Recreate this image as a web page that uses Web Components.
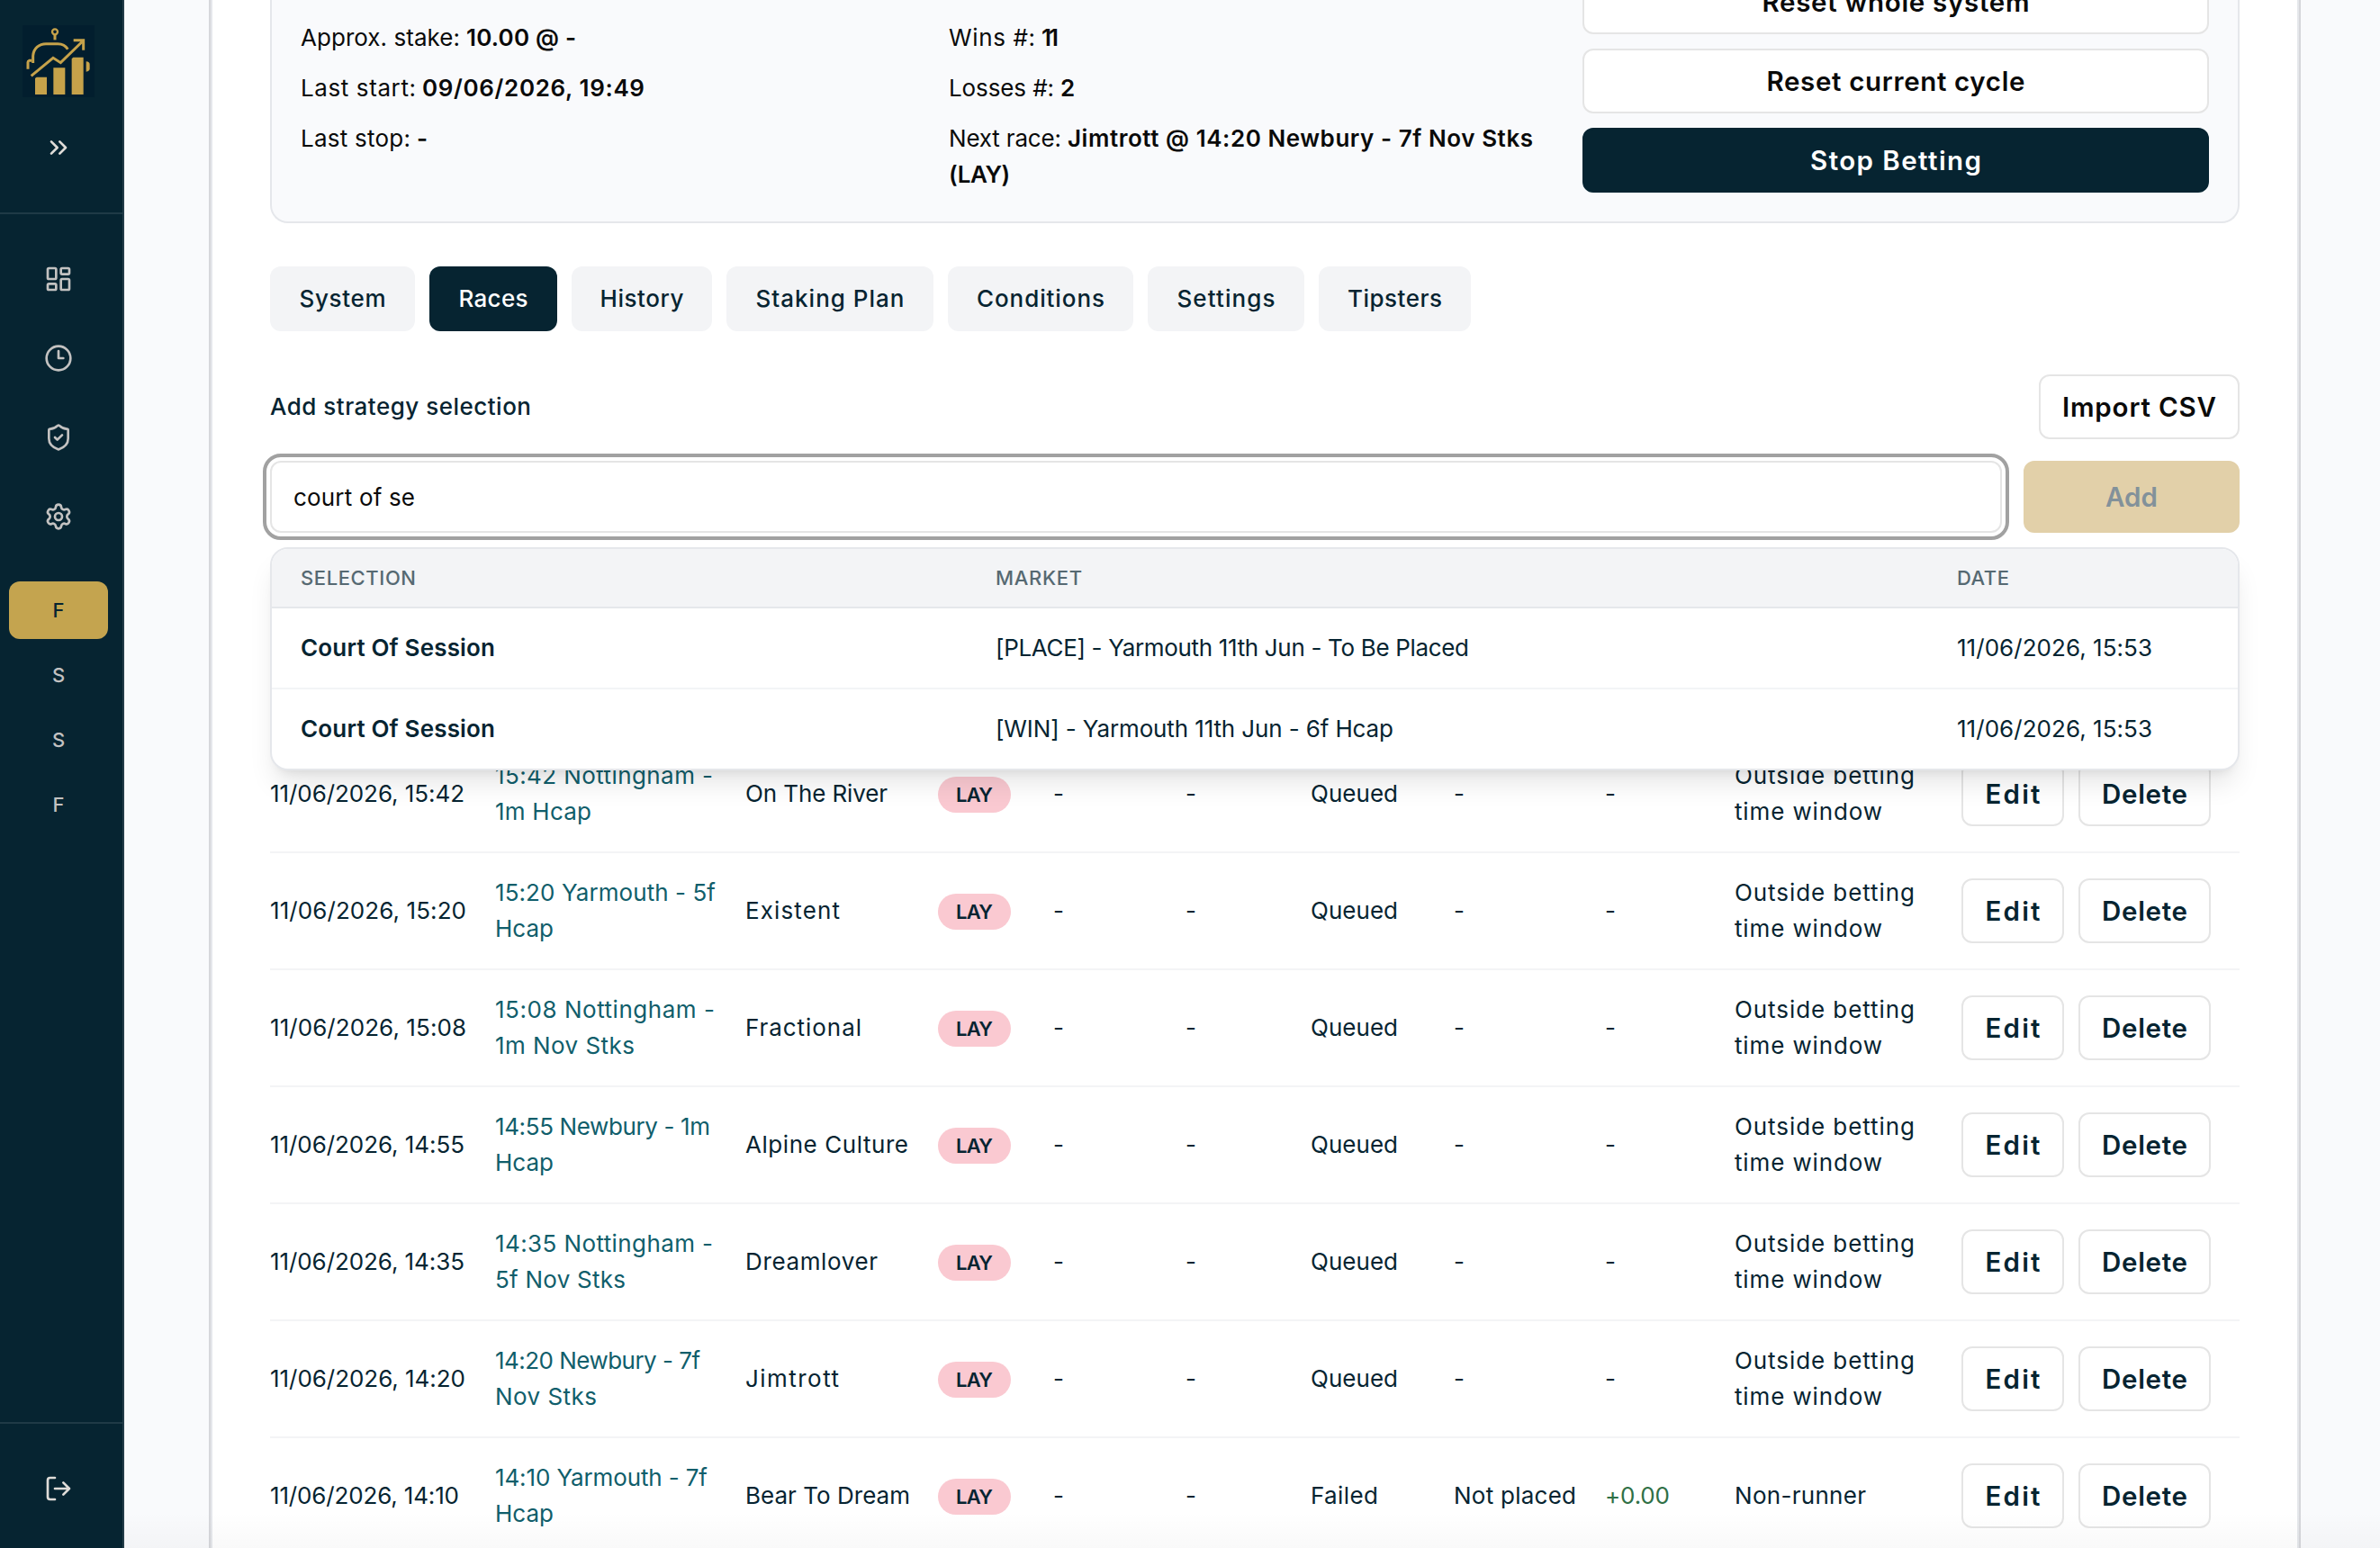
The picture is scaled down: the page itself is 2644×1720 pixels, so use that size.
<!DOCTYPE html>
<html lang="en">
<head>
<meta charset="utf-8">
<title>Races</title>
<style>
html, body { margin: 0; height: 100%; overflow: hidden; }
body { background: #f9fafc; font: 26px/40px Inter, "Liberation Sans", sans-serif; color: #062431; }
</style>
</head>
<body>
<betting-app></betting-app>
<script>
const define = (name, html, setup) => customElements.define(name, class extends HTMLElement {
    connectedCallback() {
        if (this.shadowRoot) return;
        this.attachShadow({ mode: 'open' }).innerHTML = typeof html === 'function' ? html(this) : html;
        if (setup) setup(this);
    }
});

// text tracked out to a given width
define('fit-text', `<style>:host{display:inline-block;white-space:pre}</style><slot></slot>`, el => {
    const w = +el.getAttribute('w');
    const n = el.textContent.length;
    if (!w || n < 2) return;
    const space = (w + 1 - el.getBoundingClientRect().width) / (n - 1);
    el.style.letterSpacing = space.toFixed(3) + 'px';
    el.style.marginRight = (-space).toFixed(3) + 'px';
});
const fit = (text, w) => `<fit-text w="${w || ''}">${text}</fit-text>`;

const icons = {
    expand: `<path d="m6 17 5-5-5-5M13 17l5-5-5-5"/>`,
    dashboard: `<rect x="3" y="3" width="7" height="9" rx="1"/><rect x="14" y="3" width="7" height="5" rx="1"/><rect x="14" y="12" width="7" height="9" rx="1"/><rect x="3" y="16" width="7" height="5" rx="1"/>`,
    clock: `<circle cx="12" cy="12" r="10"/><path d="M12 6v6h4"/>`,
    shield: `<path d="M20 13c0 5-3.5 7.5-7.66 8.95a1 1 0 0 1-.67-.01C7.5 20.5 4 18 4 13V6a1 1 0 0 1 1-1c2 0 4.5-1.2 6.24-2.72a1.17 1.17 0 0 1 1.52 0C14.51 3.81 17 5 19 5a1 1 0 0 1 1 1z"/><path d="m9 12 2 2 4-4"/>`,
    settings: `<path d="M9.671 4.136a2.34 2.34 0 0 1 4.659 0 2.34 2.34 0 0 0 3.319 1.915 2.34 2.34 0 0 1 2.33 4.033 2.34 2.34 0 0 0 0 3.831 2.34 2.34 0 0 1-2.33 4.033 2.34 2.34 0 0 0-3.319 1.915 2.34 2.34 0 0 1-4.659 0 2.34 2.34 0 0 0-3.32-1.915 2.34 2.34 0 0 1-2.33-4.033 2.34 2.34 0 0 0 0-3.831A2.34 2.34 0 0 1 6.35 6.051a2.34 2.34 0 0 0 3.319-1.915"/><circle cx="12" cy="12" r="3"/>`,
    logout: `<path d="m16 17 5-5-5-5M21 12H9M9 21H5a2 2 0 0 1-2-2V5a2 2 0 0 1 2-2h4"/>`,
};
define('line-icon', el =>
    `<style>:host{display:flex;width:32px;height:32px}svg{width:100%;fill:none;stroke:currentColor;stroke-width:2;stroke-linecap:round;stroke-linejoin:round}</style>` +
    `<svg viewBox="0 0 24 24">${icons[el.getAttribute('name')]}</svg>`);

define('brand-logo',
    `<style>:host{display:block;width:80px;height:80px;background:#021e2e}svg{display:block}</style>` +
    `<svg viewBox="0 0 240 240" width="80" height="80" fill="none" stroke="#c6a24a" stroke-width="9">` +
    // antenna and head
    `<circle cx="108" cy="22" r="9" stroke-width="7"/><path d="M108 32v17"/>` +
    `<path d="M35 126v-24C37 76 56 62 78 62h40q22 0 33 18M30 118h-8q-4 1-4 6v22"/>` +
    `<path d="M212 121q12 1 12 10v14q0 9-12 10z" fill="#c6a24a" stroke="none"/>` +
    // trend line
    `<path d="M29 169l73-60 25 16 76-74M170 50h33v33"/>` +
    `<path d="M42 177l5-4h34v58H42zM103 142h39v89h-39zM164 112l5-5h34v124h-39z" fill="#c6a24a" stroke="none"/></svg>`);

define('side-bar',
    `<style>
    :host{display:flex;flex-direction:column;box-sizing:border-box;width:138px;height:100%;background:#062431;border-right:2px solid #243d49;color:#c3c2c1;flex:none}
    header{border-bottom:2px solid #1f3a46;display:flex;flex-direction:column;align-items:center;padding:28px 6px 0 0;gap:40px;height:208px;color:#dfdcd8}
    nav{flex:1;display:flex;flex-direction:column;padding:40px 16px 0 10px}
    .icons{display:flex;flex-direction:column;gap:24px;margin-bottom:40px}
    .icons div{height:64px;display:grid;place-items:center}
    .letters{display:flex;flex-direction:column;gap:8px}
    .letters div{height:64px;border-radius:12px;display:grid;place-items:center;font-size:22px;font-weight:500}
    .letters .on{background:#c4a44f;color:#062431}
    footer{border-top:2px solid #1f3a46;display:flex;justify-content:center;padding:56px 6px 0 0;box-sizing:border-box;height:140px;color:#dfdcd8}
    </style>
    <header><brand-logo></brand-logo><line-icon name="expand"></line-icon></header>
    <nav>
      <div class="icons"><div><line-icon name="dashboard"></line-icon></div><div><line-icon name="clock"></line-icon></div><div><line-icon name="shield"></line-icon></div><div><line-icon name="settings"></line-icon></div></div>
      <div class="letters"><div class="on">F</div><div>S</div><div>S</div><div>F</div></div>
    </nav>
    <footer><line-icon name="logout"></line-icon></footer>`);

define('ui-button',
    `<style>
    :host{display:grid;place-items:center;box-sizing:border-box;height:72px;border:2px solid #e5e5e5;border-radius:12px;background:#fff;font-size:29.5px;font-weight:600;line-height:40px;white-space:nowrap;flex:none}
    :host([primary]){background:#062431;border-color:#062431;color:#fff}
    :host([gold]){background:#e2d0a9;border-color:#e2d0a9;color:#82919a;height:80px}
    </style><slot></slot>`);

const fact = (label, lw, value, vw) => `<div>${fit(label + ':', lw)}<b>${fit(value, vw)}</b></div>`;
define('summary-panel',
    `<style>
    :host{display:grid;grid-template-columns:720px 704px 696px;align-items:end;box-sizing:border-box;height:248px;padding:0 32px 32px;overflow:hidden;border:2px solid #e5e7eb;border-top:0;border-radius:0 0 20px 20px;background:#f9fafc;color:#0a0a0a}
    section{display:flex;flex-direction:column;gap:16px;align-self:end;height:192px;min-height:0}
    section.actions{height:auto;margin-top:-40px}
    b{font-weight:600;margin-left:7px}
    </style>
    <section>${fact('Approx. stake', 176, '10.00 @ -', 121)}${fact('Last start', 127, '09/06/2026, 19:49', 246)}${fact('Last stop', 121, '-')}</section>
    <section>${fact('Wins #', 95, '11', 18)}${fact('Losses #', 116, '2')}
      <div>${fit('Next race:', 124)}<b>${fit('Jimtrott @ 14:20 Newbury - 7f Nov Stks', 516)}</b><br><b style="margin:0">${fit('(LAY)', 67)}</b></div></section>
    <section class="actions"><ui-button>${fit('Reset whole system', 296)}</ui-button><ui-button>${fit('Reset current cycle', 286)}</ui-button><ui-button primary>${fit('Stop Betting', 189)}</ui-button></section>`);

define('tab-item',
    `<style>
    :host{display:grid;place-items:center;height:72px;border-radius:12px;background:#f3f4f6;font-weight:500}
    :host([active]){background:#062431;color:#fff}
    </style><slot></slot>`);
const tabs = [['System', 161, 95], ['Races', 142, 76], ['History', 156, 92], ['Staking Plan', 230, 164], ['Conditions', 206, 141], ['Settings', 174, 108], ['Tipsters', 169, 104]];
define('tab-bar',
    `<style>:host{display:flex;gap:16px}</style>` +
    tabs.map(([t, w, tw]) => `<tab-item style="width:${w}px"${t === 'Races' ? ' active' : ''}>${fit(t, tw)}</tab-item>`).join(''));

define('suggestion-list',
    `<style>
    :host{display:block;box-sizing:border-box;height:248px;background:#fff;border:2px solid #e5e7eb;border-radius:20px;overflow:hidden;box-shadow:0 20px 30px -6px #0000001a,0 8px 12px -8px #0000001a}
    div{display:grid;grid-template-columns:772px 1068px 1fr;align-items:center;padding-left:32px;height:88px}
    .head{height:64px;background:#f3f4f6;border-bottom:2px solid #e5e7eb;font-size:22px;font-weight:500;color:#566972}
    .line{border-bottom:2px solid #f3f4f6}
    b{font-weight:600}
    </style>
    <div class="head"><span>${fit('SELECTION', 127)}</span><span>${fit('MARKET', 95)}</span><span>${fit('DATE', 57)}</span></div>
    <div class="line"><b>${fit('Court Of Session', 215)}</b><span>${fit('[PLACE] - Yarmouth 11th Jun - To Be Placed', 525)}</span><span>${fit('11/06/2026, 15:53', 216)}</span></div>
    <div><b>${fit('Court Of Session', 215)}</b><span>${fit('[WIN] - Yarmouth 11th Jun - 6f Hcap', 441)}</span><span>${fit('11/06/2026, 15:53', 216)}</span></div>`);

define('selection-form',
    `<style>
    :host{display:block;position:relative}
    .top,.bar{display:flex;justify-content:space-between;align-items:center}
    .top{font-weight:500;margin-bottom:24px}
    .field{width:1924px;height:80px;box-sizing:border-box;border:2px solid #e5e5e5;border-radius:12px;outline:4px solid #a1a1a1;outline-offset:4px;padding:19px 24px 17px;color:#0a0a0a;background:#fff}
    suggestion-list{position:absolute;top:192px;left:0;right:0;z-index:1}
    </style>
    <div class="top">${fit('Add strategy selection', 289)}<ui-button style="width:223px;color:#0a0a0a">${fit('Import CSV', 170)}</ui-button></div>
    <div class="bar"><div class="field">${fit('court of se', 134)}</div><ui-button gold style="width:240px">${fit('Add', 57)}</ui-button></div>
    <suggestion-list></suggestion-list>`);

define('side-badge',
    `<style>:host{display:grid;place-items:center;width:81px;height:40px;border-radius:20px;background:#fac9d1;font-size:22px;font-weight:600;margin-top:2px}</style><slot></slot>`);

const rows = [
    ['15:42', 215, '15:42 Nottingham -', 241, '1m Hcap', 106, 'On The River', 157],
    ['15:20', 217, '15:20 Yarmouth - 5f', 244, 'Hcap', 64, 'Existent', 104],
    ['15:08', 217, '15:08 Nottingham -', 243, '1m Nov Stks', 154, 'Fractional', 128],
    ['14:55', 215, '14:55 Newbury - 1m', 238, 'Hcap', 64, 'Alpine Culture', 180],
    ['14:35', 215, '14:35 Nottingham -', 241, '5f Nov Stks', 144, 'Dreamlover', 146],
    ['14:20', 216, '14:20 Newbury - 7f', 227, 'Nov Stks', 112, 'Jimtrott', 103],
    ['14:10', 209, '14:10 Yarmouth - 7f', 235, 'Hcap', 64, 'Bear To Dream', 182, 1],
];
define('race-row', el => {
    const [time, tw, a, aw, b, bw, name, nw, failed] = rows[el.getAttribute('index')];
    return `<style>
    :host{display:grid;grid-template-columns:250px 278px 214px 128px 147px 139px 159px 168px 144px 251px 1fr;align-items:center;height:128px;border-bottom:2px solid #f3f4f6}
    .market{color:#105e6b}
    .plus{color:#2f7046}
    .actions{display:flex;gap:16px;margin-left:1px}
    </style>
    <span>${fit('11/06/2026, ' + time, tw)}</span>
    <span class="market">${fit(a, aw)}<br>${fit(b, bw)}</span>
    <span>${fit(name, nw)}</span>
    <side-badge>${fit('LAY', 40)}</side-badge>
    <span>-</span><span>-</span>
    <span>${failed ? fit('Failed', 74) : fit('Queued', 96)}</span>
    <span>${failed ? fit('Not placed', 135) : '-'}</span>
    <span class="${failed ? 'plus' : ''}">${failed ? fit('+0.00', 71) : '-'}</span>
    <span>${failed ? fit('Non-runner', 145) : fit('Outside betting', 199) + '<br>' + fit('time window', 163)}</span>
    <span class="actions"><ui-button style="width:114px">${fit('Edit', 60)}</ui-button><ui-button style="width:147px">${fit('Delete', 94)}</ui-button></span>`;
});
define('race-table',
    `<style>:host{display:block}</style>` + rows.map((r, i) => `<race-row index="${i}"></race-row>`).join(''));

define('betting-app',
    `<style>
    :host{display:flex;height:100vh;overflow:hidden;position:relative}
    main{width:2188px;margin-left:96px;padding:0 64px;border:solid #e5e7eb;border-width:0 2px;box-shadow:0 0 0 2px #d6d7db;background:#fff;flex:none}
    tab-bar{margin:48px 0}
    race-table{margin-top:226px}
    /* soft shade along the bottom edge */
    .shade{position:absolute;left:138px;right:0;bottom:0;height:40px;background:linear-gradient(#0000,#00000006)}
    </style>
    <side-bar></side-bar>
    <main><summary-panel></summary-panel><tab-bar></tab-bar><selection-form></selection-form><race-table></race-table></main>
    <div class="shade"></div>`);
</script>
</body>
</html>
